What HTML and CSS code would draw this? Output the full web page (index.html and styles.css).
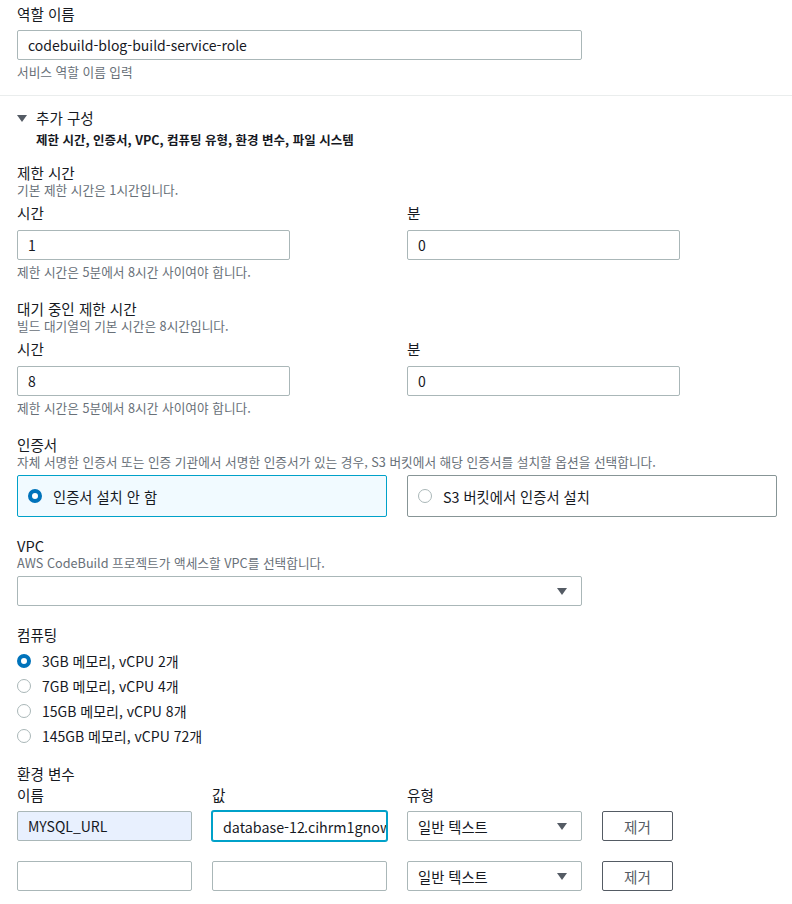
FILE: index.html
```html
<!DOCTYPE html>
<html lang="ko">
<head>
    <meta charset="UTF-8">
    <meta name="viewport" content="width=device-width, initial-scale=1.0">
    <title>프로젝트 구성</title>
    <link rel="stylesheet" href="styles.css">
</head>
<body>
    <div class="page">
        <div class="field role-field">
            <div class="label">역할 이름</div>
            <input class="input wide" type="text" value="codebuild-blog-build-service-role">
            <div class="hint below">서비스 역할 이름 입력</div>
        </div>

        <hr class="divider">

        <div class="expander">
            <div class="expander-title"><span class="caret-down"></span>추가 구성</div>
            <div class="expander-sub">제한 시간, 인증서, VPC, 컴퓨팅 유형, 환경 변수, 파일 시스템</div>
        </div>

        <!-- 제한 시간 -->
        <div class="section first">
            <div class="label">제한 시간</div>
            <div class="hint">기본 제한 시간은 1시간입니다.</div>
            <div class="two-col time-row">
                <div>
                    <div class="label">시간</div>
                    <input class="input short" type="text" value="1">
                </div>
                <div>
                    <div class="label">분</div>
                    <input class="input short" type="text" value="0">
                </div>
            </div>
            <div class="hint below">제한 시간은 5분에서 8시간 사이여야 합니다.</div>
        </div>

        <!-- 대기 중인 제한 시간 -->
        <div class="section">
            <div class="label">대기 중인 제한 시간</div>
            <div class="hint">빌드 대기열의 기본 시간은 8시간입니다.</div>
            <div class="two-col time-row">
                <div>
                    <div class="label">시간</div>
                    <input class="input short" type="text" value="8">
                </div>
                <div>
                    <div class="label">분</div>
                    <input class="input short" type="text" value="0">
                </div>
            </div>
            <div class="hint below">제한 시간은 5분에서 8시간 사이여야 합니다.</div>
        </div>

        <!-- 인증서 -->
        <div class="section">
            <div class="label">인증서</div>
            <div class="hint">자체 서명한 인증서 또는 인증 기관에서 서명한 인증서가 있는 경우, S3 버킷에서 해당 인증서를 설치할 옵션을 선택합니다.</div>
            <div class="two-col tiles">
                <div class="tile selected"><span class="radio checked"></span>인증서 설치 안 함</div>
                <div class="tile"><span class="radio"></span>S3 버킷에서 인증서 설치</div>
            </div>
        </div>

        <!-- VPC -->
        <div class="section">
            <div class="label">VPC</div>
            <div class="hint">AWS CodeBuild 프로젝트가 액세스할 VPC를 선택합니다.</div>
            <div class="select wide vpc-select"><span class="select-text"></span><span class="select-arrow"></span></div>
        </div>

        <!-- 컴퓨팅 -->
        <div class="section">
            <div class="label">컴퓨팅</div>
            <div class="radio-list">
                <div class="radio-row"><span class="radio checked"></span>3GB 메모리, vCPU 2개</div>
                <div class="radio-row"><span class="radio"></span>7GB 메모리, vCPU 4개</div>
                <div class="radio-row"><span class="radio"></span>15GB 메모리, vCPU 8개</div>
                <div class="radio-row"><span class="radio"></span>145GB 메모리, vCPU 72개</div>
            </div>
        </div>

        <!-- 환경 변수 -->
        <div class="section env">
            <div class="label">환경 변수</div>
            <div class="env-grid">
                <div class="label env-head">이름</div>
                <div class="label env-head">값</div>
                <div class="label env-head">유형</div>
                <div></div>

                <input class="input autofill" type="text" value="MYSQL_URL">
                <div class="input focused"><span>database-12</span><span class="text-caret"></span><span>.cihrm1gnow</span></div>
                <div class="select"><span class="select-text">일반 텍스트</span><span class="select-arrow"></span></div>
                <button class="btn">제거</button>

                <input class="input row2" type="text" value="">
                <input class="input row2" type="text" value="">
                <div class="select row2"><span class="select-text">일반 텍스트</span><span class="select-arrow"></span></div>
                <button class="btn row2">제거</button>
            </div>
        </div>
    </div>
</body>
</html>
```

FILE: styles.css
```css
body {
    margin: 0;
    font-family: 'Noto Sans CJK KR', 'Noto Sans', sans-serif;
    font-size: 14px;
    color: #16191f;
    background-color: #ffffff;
}
.page {
    padding: 4px 17px 0 17px;
    width: 760px;
}
.label {
    font-size: 14.6px;
    line-height: 18px;
    color: #16191f;
}
.role-field .label {
    line-height: 20px;
    margin-bottom: 6px;
}
.hint {
    font-size: 12.7px;
    line-height: 16px;
    color: #687078;
}
.hint.below {
    margin-top: 4px;
}
.input {
    box-sizing: border-box;
    height: 30px;
    border: 1px solid #aab7b8;
    border-radius: 2px;
    padding: 0 10px;
    font-family: inherit;
    font-size: 14px;
    color: #16191f;
    background-color: #ffffff;
    outline: none;
    display: block;
    width: 100%;
}
.input.wide,
.select.wide {
    width: 565px;
}
.input.short {
    width: 273px;
}
.divider {
    border: none;
    border-top: 1px solid #eaeded;
    margin: 15px -17px 0 -17px;
}
.expander {
    margin-top: 12px;
}
.expander-title {
    display: flex;
    align-items: center;
    font-size: 14.6px;
    line-height: 20px;
}
.caret-down {
    width: 0;
    height: 0;
    border-left: 5px solid transparent;
    border-right: 5px solid transparent;
    border-top: 7px solid #545b64;
    margin-right: 9px;
}
.expander-sub {
    margin-top: 4px;
    padding-left: 19px;
    font-size: 12.5px;
    line-height: 16px;
    font-weight: 700;
}
.section {
    margin-top: 20px;
}
.section.first {
    margin-top: 16px;
}
.two-col {
    display: grid;
    grid-template-columns: 370px 370px;
    column-gap: 20px;
}
.time-row {
    margin-top: 6px;
}
.time-row .label {
    margin-bottom: 8px;
}
.tiles {
    margin-top: 5px;
}
.tile {
    box-sizing: border-box;
    height: 42px;
    border: 1px solid #879596;
    border-radius: 2px;
    display: flex;
    align-items: center;
    padding-left: 10px;
    gap: 11px;
    font-size: 14.3px;
}
.tile.selected {
    border-color: #00a1c9;
    background-color: #f1faff;
}
.radio {
    box-sizing: border-box;
    display: inline-block;
    width: 14px;
    height: 14px;
    border-radius: 50%;
    border: 1px solid #aab7b8;
    background-color: #ffffff;
    flex-shrink: 0;
}
.radio.checked {
    border: 4px solid #0073bb;
}
.select {
    box-sizing: border-box;
    height: 30px;
    border: 1px solid #aab7b8;
    border-radius: 2px;
    display: flex;
    align-items: center;
    justify-content: space-between;
    padding: 0 14px 0 10px;
    background-color: #ffffff;
    font-size: 14.3px;
}
.select-arrow {
    width: 0;
    height: 0;
    border-left: 5px solid transparent;
    border-right: 5px solid transparent;
    border-top: 7px solid #545b64;
}
.vpc-select {
    margin-top: 5px;
}
.radio-list {
    margin-top: 4px;
}
.radio-row {
    display: flex;
    align-items: center;
    gap: 11px;
    height: 25px;
}
.section.env {
    margin-top: 17px;
}
.env-grid {
    display: grid;
    grid-template-columns: 175px 175px 175px 71px;
    column-gap: 20px;
    margin-top: 3px;
}
.env-head {
    margin-bottom: 7px;
}
.input.autofill {
    background-color: #e8f0fe;
}
.input.focused {
    display: flex;
    align-items: center;
    white-space: nowrap;
    overflow: hidden;
    font-size: 14.3px;
    border-color: #00a1c9;
    box-shadow: 0 0 0 1px #00a1c9;
}
.text-caret {
    display: inline-block;
    width: 1px;
    height: 18px;
    background-color: #16191f;
    margin: 0 -1px 0 0;
}
.btn {
    box-sizing: border-box;
    height: 30px;
    border: 1px solid #545b64;
    border-radius: 2px;
    background-color: #ffffff;
    color: #545b64;
    font-family: inherit;
    font-size: 14.6px;
    padding: 0;
}
.row2 {
    margin-top: 20px;
}
```
